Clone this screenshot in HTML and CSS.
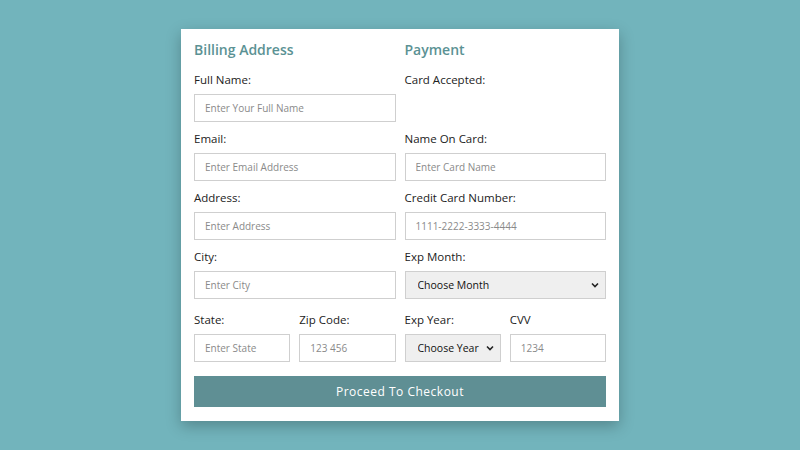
FILE: index.html
```html
<!DOCTYPE html>
<html>
<head>
<link rel="stylesheet" href="styles.css">
</head>
<body>
  <div class="container">
    <form action="">
      <div class="row">
        <div class="col">
          <h3 class="title">Billing Address</h3>
          <div class="inputBox">
            <span>Full Name:</span>
            <input type="text" placeholder="Enter Your Full Name">
          </div>
          <div class="inputBox">
            <span>Email:</span>
            <input type="email" placeholder="Enter Email Address">
          </div>
          <div class="inputBox">
            <span>Address:</span>
            <input type="text" placeholder="Enter Address">
          </div>
          <div class="inputBox">
            <span>City:</span>
            <input type="text" placeholder="Enter City">
          </div>
          <div class="flex">
            <div class="inputBox">
              <span>State:</span>
              <input type="text" placeholder="Enter State">
            </div>
            <div class="inputBox">
              <span>Zip Code:</span>
              <input type="number" placeholder="123 456">
            </div>
          </div>
        </div>

        <div class="col">
          <h3 class="title">Payment</h3>
          <div class="inputBox">
            <span>Card Accepted:</span>
            <div class="cards"></div>
          </div>
          <div class="inputBox">
            <span>Name On Card:</span>
            <input type="text" placeholder="Enter Card Name">
          </div>
          <div class="inputBox">
            <span>Credit Card Number:</span>
            <input type="text" placeholder="1111-2222-3333-4444">
          </div>
          <div class="inputBox">
            <span>Exp Month:</span>
            <select>
              <option value="">Choose Month</option>
              <option>January</option>
              <option>February</option>
              <option>March</option>
            </select>
          </div>
          <div class="flex">
            <div class="inputBox">
              <span>Exp Year:</span>
              <select>
                <option value="">Choose Year</option>
                <option>2023</option>
                <option>2024</option>
                <option>2025</option>
              </select>
            </div>
            <div class="inputBox">
              <span>CVV</span>
              <input type="number" placeholder="1234">
            </div>
          </div>
        </div>
      </div>
      <input type="submit" value="Proceed To Checkout" class="submit_btn">
    </form>
  </div>
</body>
</html>
```

FILE: styles.css
```css
* {
  margin: 0;
  padding: 0;
  box-sizing: border-box;
  font-family: "Open Sans", sans-serif;
}

body {
  background: #72b4bc;
  min-height: 100vh;
  display: flex;
  align-items: center;
  justify-content: center;
}

.container form {
  width: 438px;
  padding: 13px 13px 14px;
  background: #fff;
  box-shadow: 0 5px 14px rgba(0, 0, 0, 0.25);
}

.row {
  display: flex;
  gap: 9px;
}

.col {
  flex: 1;
  min-width: 0;
}

.title {
  font-size: 14px;
  line-height: 16px;
  font-weight: 600;
  color: #5b9294;
  margin-bottom: 13px;
}

.inputBox {
  margin-bottom: 8px;
}

.inputBox span {
  display: block;
  font-size: 11.5px;
  line-height: 17px;
  color: #222;
  margin-bottom: 6px;
}

.inputBox input,
.inputBox select {
  display: block;
  width: 100%;
  height: 28px;
  border: 1px solid #cfcfcf;
  padding: 0 10px;
  font-size: 10px;
  color: #333;
  outline: none;
}

.inputBox input::placeholder {
  color: #8a8a8a;
}

.inputBox select {
  -webkit-appearance: none;
  appearance: none;
  background: #efefef url("data:image/svg+xml,%3Csvg xmlns='http://www.w3.org/2000/svg' width='8' height='6' viewBox='0 0 8 6'%3E%3Cpath d='M1 1.5l3 3 3-3' fill='none' stroke='%23222' stroke-width='1.6'/%3E%3C/svg%3E") no-repeat right 6px center;
  color: #111;
  font-size: 10.5px;
  padding: 0 12px;
}

.cards {
  height: 28px;
}

.flex {
  display: flex;
  gap: 9px;
  margin-top: 12px;
}

.flex .inputBox {
  flex: 1;
  margin-bottom: 0;
}

.submit_btn {
  display: block;
  width: 100%;
  height: 31px;
  margin-top: 14px;
  border: none;
  background: #5f8f94;
  color: #fff;
  font-size: 12px;
  letter-spacing: 0.5px;
  cursor: pointer;
}
```
